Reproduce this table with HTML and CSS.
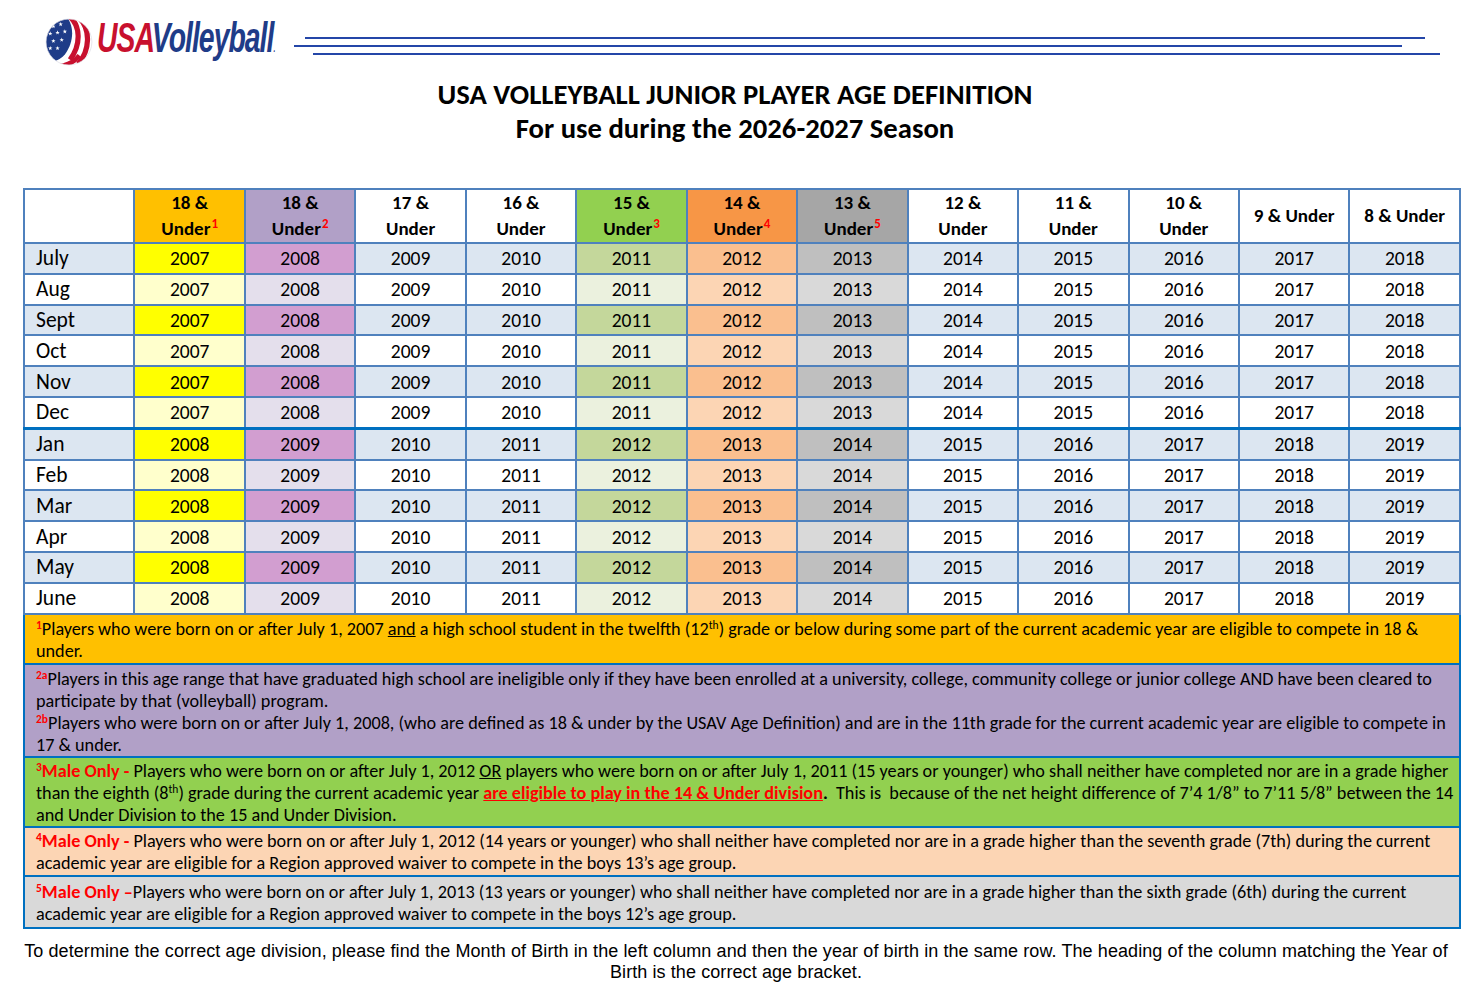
FILE: index.html
```html
<!DOCTYPE html>
<html lang="en">
<head>
<meta charset="utf-8">
<title>USA Volleyball Junior Player Age Definition</title>
<link rel="stylesheet" href="styles.css">
</head>
<body>
<div class="page">
  <header class="top">
    <div class="logo">
      <svg class="ball" width="50" height="50" viewBox="0 0 48 48" aria-hidden="true">
        <defs>
          <clipPath id="ballclip"><circle cx="24" cy="24" r="22"/></clipPath>
          <polygon id="star" points="0,-2.2 0.52,-0.71 2.09,-0.68 0.84,0.27 1.29,1.78 0,0.88 -1.29,1.78 -0.84,0.27 -2.09,-0.68 -0.52,-0.71" fill="#fff"/>
        </defs>
        <g clip-path="url(#ballclip)">
          <rect width="48" height="48" fill="#fff"/>
          <path d="M0,0 H22 C29,9 29,24 20,36 C14,43 6,44 0,42 Z" fill="#1f3c88"/>
          <path d="M24,-1 C35,8 36,26 25,41" stroke="#c8102e" stroke-width="5" fill="none"/>
          <path d="M34,1 C45,12 44,32 33,45" stroke="#c8102e" stroke-width="5" fill="none"/>
          <path d="M2,44 C12,50 26,47 34,37" stroke="#c8102e" stroke-width="4.5" fill="none"/>
          <use href="#star" x="9" y="9"/>
          <use href="#star" x="16" y="7"/>
          <use href="#star" x="6" y="16"/>
          <use href="#star" x="13" y="15"/>
          <use href="#star" x="20" y="14"/>
          <use href="#star" x="9" y="23"/>
          <use href="#star" x="17" y="22"/>
          <use href="#star" x="6" y="30"/>
          <use href="#star" x="13" y="30"/>
        </g>
        <circle cx="24" cy="24" r="22" fill="none" stroke="#d8d8e0" stroke-width="0.6"/>
      </svg>
      <div class="wordmark"><span class="usa">USA</span><span class="vb">Volleyball</span><span class="tm">.</span></div>
    </div>
    <div class="rules">
      <div class="rule r1"></div>
      <div class="rule r2"></div>
      <div class="rule r3"></div>
    </div>
  </header>

  <h1 class="title">USA VOLLEYBALL JUNIOR PLAYER AGE DEFINITION<br>For use during the 2026-2027 Season</h1>

  <table class="ages">
    <colgroup>
      <col><col><col><col><col><col><col><col><col><col><col><col><col>
    </colgroup>
    <thead>
      <tr class="head">
        <th class="blank"></th>
        <th class="c18a">18 &amp;<br>Under<sup>1</sup></th>
        <th class="c18b">18 &amp;<br>Under<sup>2</sup></th>
        <th>17 &amp;<br>Under</th>
        <th>16 &amp;<br>Under</th>
        <th class="c15">15 &amp;<br>Under<sup>3</sup></th>
        <th class="c14">14 &amp;<br>Under<sup>4</sup></th>
        <th class="c13">13 &amp;<br>Under<sup>5</sup></th>
        <th>12 &amp;<br>Under</th>
        <th>11 &amp;<br>Under</th>
        <th>10 &amp;<br>Under</th>
        <th>9 &amp; Under</th>
        <th>8 &amp; Under</th>
      </tr>
    </thead>
    <tbody id="rows"></tbody>
    <tfoot>
      <tr><td colspan="13" class="fn fn1"><sup class="red">1</sup>Players who were born on or after July 1, 2007 <u>and</u> a high school student in the twelfth (12<sup>th</sup>) grade or below during some part of the current academic year are eligible to compete in 18 &amp;<br>under.</td></tr>
      <tr><td colspan="13" class="fn fn2"><p><sup class="red">2a</sup>Players in this age range that have graduated high school are ineligible only if they have been enrolled at a university, college, community college or junior college AND have been cleared to<br>participate by that (volleyball) program.</p><p><sup class="red">2b</sup>Players who were born on or after July 1, 2008, (who are defined as 18 &amp; under by the USAV Age Definition) and are in the 11th grade for the current academic year are eligible to compete in<br>17 &amp; under.</p></td></tr>
      <tr><td colspan="13" class="fn fn3"><span class="red"><sup>3</sup>Male Only -</span> Players who were born on or after July 1, 2012 <u>OR</u> players who were born on or after July 1, 2011 (15 years or younger) who shall neither have completed nor are in a grade higher<br>than the eighth (8<sup>th</sup>) grade during the current academic year <span class="red strong"><u>are eligible to play in the 14 &amp; Under division</u></span><b>.</b>&nbsp; This is&nbsp; because of the net height difference of 7’4 1/8” to 7’11 5/8” between the 14<br>and Under Division to the 15 and Under Division.</td></tr>
      <tr><td colspan="13" class="fn fn4"><span class="red"><sup>4</sup>Male Only -</span> Players who were born on or after July 1, 2012 (14 years or younger) who shall neither have completed nor are in a grade higher than the seventh grade (7th) during the current<br>academic year are eligible for a Region approved waiver to compete in the boys 13’s age group.</td></tr>
      <tr><td colspan="13" class="fn fn5"><span class="red"><sup>5</sup>Male Only –</span>Players who were born on or after July 1, 2013 (13 years or younger) who shall neither have completed nor are in a grade higher than the sixth grade (6th) during the current<br>academic year are eligible for a Region approved waiver to compete in the boys 12’s age group.</td></tr>
    </tfoot>
  </table>

  <p class="note">To determine the correct age division, please find the Month of Birth in the left column and then the year of birth in the same row. The heading of the column matching the Year of<br>Birth is the correct age bracket.</p>
</div>
<script src="app.js"></script>
</body>
</html>
```

FILE: app.js
```javascript
(function () {
  var months = ["July", "Aug", "Sept", "Oct", "Nov", "Dec", "Jan", "Feb", "Mar", "Apr", "May", "June"];
  var cls = ["c18a", "c18b", "", "", "c15", "c14", "c13", "", "", "", "", ""];
  var body = document.getElementById("rows");
  months.forEach(function (m, i) {
    var tr = document.createElement("tr");
    tr.className = (i % 2 === 0 ? "odd" : "even") + (i === 6 ? " split" : "");
    var base = i < 6 ? 2007 : 2008;
    var th = document.createElement("td");
    th.className = "month";
    th.textContent = m;
    tr.appendChild(th);
    for (var c = 0; c < 12; c++) {
      var td = document.createElement("td");
      if (cls[c]) td.className = cls[c];
      td.textContent = String(base + c);
      tr.appendChild(td);
    }
    body.appendChild(tr);
  });
})();
```

FILE: styles.css
```css
html, body {
  margin: 0;
  padding: 0;
  background: #fff;
}

.page {
  width: 1483px;
  font-family: Carlito, Calibri, Lato, "Noto Sans", sans-serif;
  color: #000;
}

/* ---------- header ---------- */
.top {
  height: 75px;
  display: flex;
  align-items: flex-start;
}

.logo {
  display: flex;
  align-items: center;
  margin-left: 44px;
  margin-top: 14px;
  width: 250px;
}

.ball {
  display: block;
  flex: none;
}

.wordmark {
  margin-left: 3px;
  margin-top: 2px;
  font-family: "Liberation Sans", Arial, sans-serif;
  font-weight: 700;
  font-style: italic;
  font-size: 43px;
  letter-spacing: -1.5px;
  line-height: 43px;
  white-space: nowrap;
  transform: scaleX(0.66);
  transform-origin: left center;
}

.usa { color: #c8102e; }
.vb { color: #1f3c88; }
.tm { color: #1f3c88; font-size: 10px; }

.rules {
  flex: 1;
  padding-top: 37px;
  display: flex;
  flex-direction: column;
  gap: 6px;
}

.rule {
  height: 2px;
  background: #2446a8;
}

.r1 { margin-left: 11px; margin-right: 58px; }
.r2 { margin-left: 0; margin-right: 81px; }
.r3 { margin-left: 19px; margin-right: 43px; }

/* ---------- title ---------- */
.title {
  margin: 3px 0 0;
  text-align: center;
  font-size: 28.7px;
  line-height: 34px;
  font-weight: 700;
  padding-right: 13px;
}

/* ---------- table ---------- */
.ages {
  margin: 42px 0 0 23px;
  width: 1438px;
  table-layout: fixed;
  border-collapse: collapse;
}

.ages th,
.ages td {
  border: 2px solid #4f81bd;
  padding: 0;
  text-align: center;
}

.ages th {
  height: 51px;
  font-size: 19px;
  line-height: 26px;
  font-weight: 700;
  background: #fff;
}

.ages th sup,
.red {
  color: #ff0000;
}

.ages th sup {
  font-size: 13px;
  line-height: 0;
  vertical-align: 7px;
  margin-left: 1px;
}

.ages tbody td {
  height: 28.8px;
  font-size: 19.5px;
  line-height: 24px;
}

.ages tbody td.month {
  text-align: left;
  padding-left: 11px;
  font-size: 21.5px;
}

.ages tbody tr.split td {
  border-top: 3px solid #0070c0;
}

.odd td { background: #dce6f1; }
.even td { background: #fff; }

.ages th.c18a { background: #ffc000; }
.ages th.c18b { background: #b1a0c7; }
.ages th.c15 { background: #92d050; }
.ages th.c14 { background: #f79646; }
.ages th.c13 { background: #a6a6a6; }

.odd td.c18a { background: #ffff00; }
.even td.c18a { background: #ffffcc; }
.odd td.c18b { background: #d29ed0; }
.even td.c18b { background: #e4dfec; }
.odd td.c15 { background: #c4d79b; }
.even td.c15 { background: #ebf1de; }
.odd td.c14 { background: #fabf8f; }
.even td.c14 { background: #fcd5b4; }
.odd td.c13 { background: #bfbfbf; }
.even td.c13 { background: #d9d9d9; }

/* ---------- footnotes ---------- */
.ages td.fn {
  border: 2px solid #0070c0;
  text-align: left;
  font-size: 18.2px;
  line-height: 22px;
  padding: 3px 10px 1px 11px;
  white-space: nowrap;
}

.fn p { margin: 0; }

.fn sup {
  font-size: 11.5px;
  line-height: 0;
  vertical-align: 6px;
}

.fn .red {
  font-weight: 700;
}

.fn1 { background: #ffc000; }
.ages td.fn2 { background: #b1a0c7; padding-bottom: 0; }
.ages td.fn3 { background: #92d050; padding-top: 2px; padding-bottom: 0; }
.ages td.fn4 { background: #fcd5b4; padding-top: 2px; }
.ages td.fn5 {
  background: #d9d9d9;
  padding-top: 4px;
  padding-bottom: 2px;
}

.strong { font-weight: 700; }

/* ---------- bottom note ---------- */
.note {
  margin: 12px 0 0;
  padding-right: 11px;
  text-align: center;
  font-family: "Liberation Sans", Arial, sans-serif;
  font-size: 18px;
  line-height: 21px;
  letter-spacing: 0.09px;
}
```
